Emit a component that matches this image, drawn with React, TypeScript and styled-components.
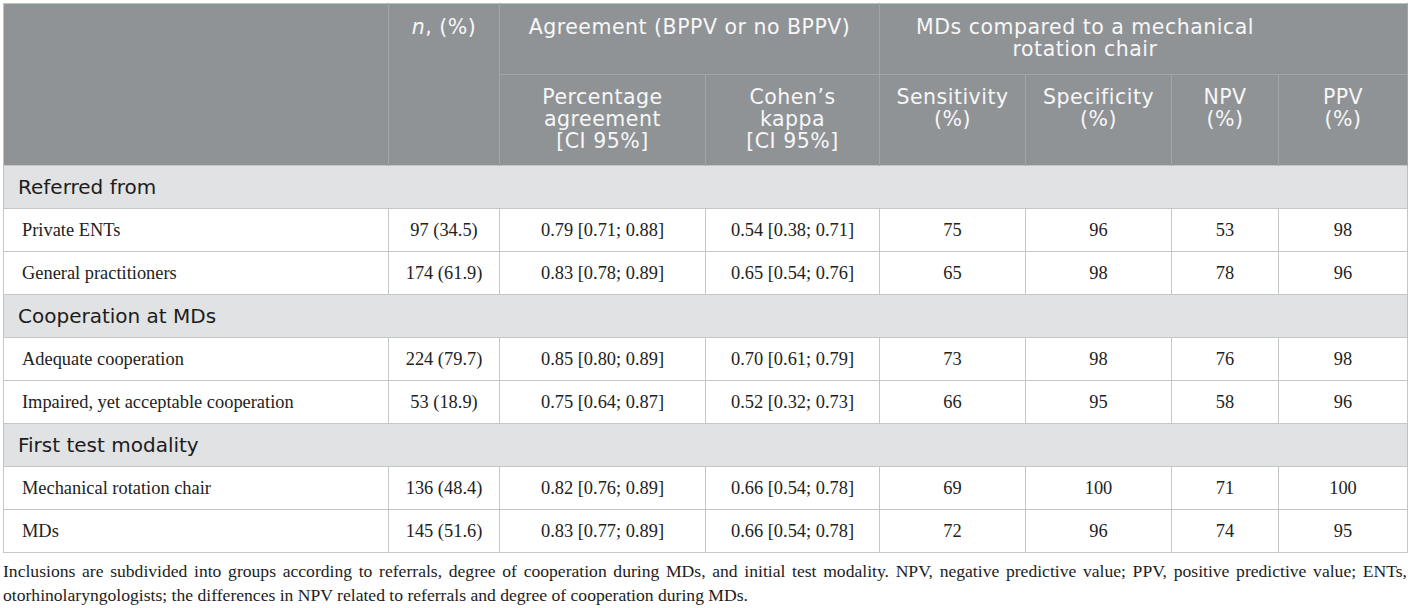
import React from "react";
import styled, { createGlobalStyle } from "styled-components";

const GlobalStyle = createGlobalStyle`
  html, body { margin: 0; padding: 0; background: #ffffff; }
`;

const Page = styled.div`
  padding: 3px 4px 0 3px;
  width: 1404px;
`;

const Table = styled.table`
  width: 1404px;
  border-collapse: collapse;
  table-layout: fixed;
  border: 1px solid #b7c4bf;
`;

const HeadRow = styled.tr<{ $h: number }>`
  height: ${(p) => p.$h}px;
`;

const HeadCell = styled.th<{ $pr?: number }>`
  background: #8f9396;
  color: #f7f7f7;
  font-family: "DejaVu Sans", "Open Sans", sans-serif;
  font-weight: 400;
  font-size: 20.5px;
  letter-spacing: 0.5px;
  line-height: 22px;
  text-align: center;
  vertical-align: top;
  padding: 12px ${(p) => p.$pr ?? 8}px 0 ${(p) => (p.$pr ? 18 : 8)}px;
  border: 1px solid #a2a6a8;
  border-top: none;
  border-bottom: none;
  &:first-child { border-left: none; }
`;

const Head2Cell = styled(HeadCell)`
  border-top: 1px solid #a2a6a8;
  padding-top: 11px;
`;

const BodyRow = styled.tr`
  height: 43px;
`;

const SectionCell = styled.td`
  background: #e1e2e3;
  color: #1c1c1c;
  font-family: "DejaVu Sans", "Open Sans", sans-serif;
  font-size: 20px;
  line-height: 22px;
  padding: 0 0 0 14px;
  border-top: 1px solid #c3c7c6;
  border-bottom: 1px solid #c3c7c6;
  vertical-align: middle;
`;

const Cell = styled.td<{ $left?: boolean }>`
  font-family: "Liberation Serif", "Times New Roman", serif;
  font-size: 18.4px;
  color: #222222;
  text-align: ${(p) => (p.$left ? "left" : "center")};
  padding: 0;
  padding-left: ${(p) => (p.$left ? "18px" : "0")};
  vertical-align: middle;
  border: 1px solid #c3c7c6;
  white-space: nowrap;
`;

const Caption = styled.p`
  margin: 6px 0 0 0;
  width: 1404px;
  font-family: "Liberation Serif", "Times New Roman", serif;
  font-size: 17.6px;
  line-height: 24px;
  color: #1c1c1c;
  text-align: justify;
`;

type Row = [string, string, string, string, string, string, string, string];

const sections: { title: string; rows: Row[] }[] = [
  {
    title: "Referred from",
    rows: [
      ["Private ENTs", "97 (34.5)", "0.79 [0.71; 0.88]", "0.54 [0.38; 0.71]", "75", "96", "53", "98"],
      ["General practitioners", "174 (61.9)", "0.83 [0.78; 0.89]", "0.65 [0.54; 0.76]", "65", "98", "78", "96"],
    ],
  },
  {
    title: "Cooperation at MDs",
    rows: [
      ["Adequate cooperation", "224 (79.7)", "0.85 [0.80; 0.89]", "0.70 [0.61; 0.79]", "73", "98", "76", "98"],
      ["Impaired, yet acceptable cooperation", "53 (18.9)", "0.75 [0.64; 0.87]", "0.52 [0.32; 0.73]", "66", "95", "58", "96"],
    ],
  },
  {
    title: "First test modality",
    rows: [
      ["Mechanical rotation chair", "136 (48.4)", "0.82 [0.76; 0.89]", "0.66 [0.54; 0.78]", "69", "100", "71", "100"],
      ["MDs", "145 (51.6)", "0.83 [0.77; 0.89]", "0.66 [0.54; 0.78]", "72", "96", "74", "95"],
    ],
  },
];

const widths = [385, 111, 206, 174, 146, 146, 107, 129];

export default function App() {
  return (
    <Page>
      <GlobalStyle />
      <Table>
        <colgroup>
          {widths.map((w, i) => (
            <col key={i} style={{ width: w }} />
          ))}
        </colgroup>
        <thead>
          <HeadRow $h={71}>
            <HeadCell rowSpan={2} />
            <HeadCell rowSpan={2}>
              <i>n</i>, (%)
            </HeadCell>
            <HeadCell colSpan={2}>Agreement (BPPV or no BPPV)</HeadCell>
            <HeadCell colSpan={4} $pr={135}>
              MDs compared to a mechanical rotation chair
            </HeadCell>
          </HeadRow>
          <HeadRow $h={91}>
            <Head2Cell>
              Percentage
              <br />
              agreement
              <br />
              [CI 95%]
            </Head2Cell>
            <Head2Cell>
              Cohen’s
              <br />
              kappa
              <br />
              [CI 95%]
            </Head2Cell>
            <Head2Cell>
              Sensitivity
              <br />
              (%)
            </Head2Cell>
            <Head2Cell>
              Specificity
              <br />
              (%)
            </Head2Cell>
            <Head2Cell>
              NPV
              <br />
              (%)
            </Head2Cell>
            <Head2Cell>
              PPV
              <br />
              (%)
            </Head2Cell>
          </HeadRow>
        </thead>
        <tbody>
          {sections.map((s) => (
            <React.Fragment key={s.title}>
              <BodyRow>
                <SectionCell colSpan={8}>{s.title}</SectionCell>
              </BodyRow>
              {s.rows.map((r) => (
                <BodyRow key={r[0]}>
                  {r.map((v, i) => (
                    <Cell key={i} $left={i === 0}>
                      {v}
                    </Cell>
                  ))}
                </BodyRow>
              ))}
            </React.Fragment>
          ))}
        </tbody>
      </Table>
      <Caption>
        Inclusions are subdivided into groups according to referrals, degree of cooperation during MDs, and initial test
        modality. NPV, negative predictive value; PPV, positive predictive value; ENTs, otorhinolaryngologists; the
        differences in NPV related to referrals and degree of cooperation during MDs.
      </Caption>
    </Page>
  );
}
